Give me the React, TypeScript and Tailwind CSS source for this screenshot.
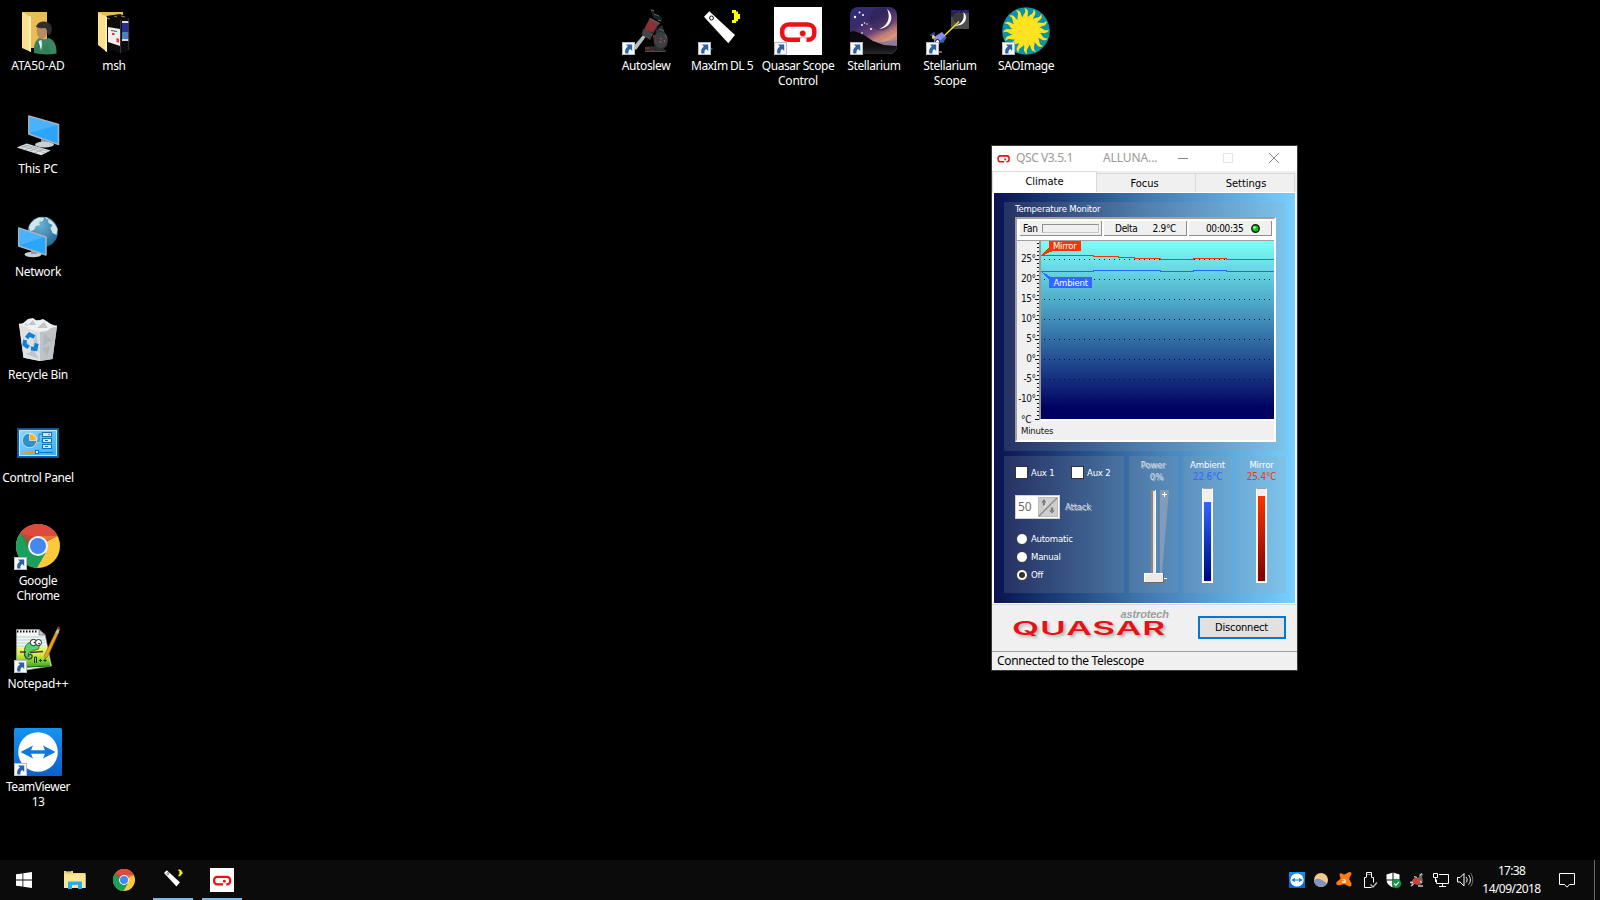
import type { ReactNode } from 'react';

const segoe = "font-['Noto_Sans','Open_Sans',sans-serif]";
const tahoma = "font-['DejaVu_Sans_Condensed','DejaVu_Sans',sans-serif] [font-stretch:condensed]";

/* ---------- shared drawings ---------- */

function ShortcutArrow() {
  return (
    <g>
      <rect x="0" y="35" width="13" height="13" fill="#b8bcc2" />
      <rect x="1" y="36" width="11" height="11" fill="#f7f8fa" />
      <path d="M4 37.500h6.200v6.400l-2-1.800c-1.500 1-2 2.200-1.700 4.400H3.400c-.9-3.300.3-5.500 2.500-7z" fill="#2f5fa5" />
    </g>
  );
}

function Icon48({ children, shortcut = false }: { children: ReactNode; shortcut?: boolean }) {
  return (
    <svg width="48" height="48" viewBox="0 0 48 48" className="shrink-0">
      {children}
      {shortcut && <ShortcutArrow />}
    </svg>
  );
}

function QuasarMark() {
  return (
    <g fill="none" stroke="#ee1014" strokeWidth="4.500">
      <path d="M26 32.700H14.500a6.300 6.300 0 0 1-6.300-6.300v-2.600a6.300 6.300 0 0 1 6.300-6.300h19.500a6.300 6.300 0 0 1 6.300 6.300v2.600a6.300 6.300 0 0 1-6.300 6.300h-1.500" />
      <path d="M26 31.500l3-2 3 2" strokeWidth="1.500" stroke="#f9a9a9" />
      <circle cx="28.700" cy="26.300" r="2.900" fill="#ee1014" stroke="none" />
    </g>
  );
}

function ChromeArt() {
  return (
    <g>
      <circle cx="24" cy="24" r="22" fill="#fdc93c" />
      <path d="M24 24L6.200 11A22 22 0 0 0 23 46l8.600-15z" fill="#1a9f5c" />
      <path d="M24 24L6.200 11A22 22 0 0 1 43.600 14z" fill="#dc4b3e" />
      <path d="M24 14h19.600L31 19z" fill="#e0a92c" opacity=".5" />
      <path d="M15 28L6.200 11L20 15z" fill="#b8382d" opacity=".5" />
      <circle cx="24" cy="24" r="10" fill="#f1f4f8" />
      <circle cx="24" cy="24" r="8" fill="#4688f1" />
    </g>
  );
}

function TeamViewerArt() {
  return (
    <g>
      <defs>
        <linearGradient id="tv" x1="0" y1="0" x2="0" y2="1">
          <stop offset="0" stopColor="#1593ee" />
          <stop offset="1" stopColor="#0b60cb" />
        </linearGradient>
      </defs>
      <rect width="48" height="48" rx="1.500" fill="url(#tv)" />
      <circle cx="24" cy="24" r="19.800" fill="#fff" />
      <path d="M6.500 24l12.500-6.500-2 4.700h14l-2-4.700L41.500 24 29 30.500l2-4.700H17l2 4.700z" fill="#1179dc" />
    </g>
  );
}

function TelescopeArt() {
  return (
    <g>
      <path d="M6 9.700l5.300-5.400L37 28l-6.700 8.300z" fill="#fff" />
      <circle cx="13.500" cy="11" r="2" fill="none" stroke="#111" strokeWidth="1" />
      <path d="M34 3h4v1.500h2V7h2v5h-2v2.300h-2V16h-4v-3h2V6h-2z" fill="#ff0" />
    </g>
  );
}

/* ---------- desktop icons ---------- */

function UserFolder() {
  return (
    <Icon48>
      <path d="M8 5h25v36H16z" fill="#e9bd55" />
      <path d="M8 5l9 5v35l-9-4z" fill="#fbe090" />
      <path d="M17 10v35l-2-1V9z" fill="#fff0b8" />
      <path d="M20 46c-.5-8 1.500-13 6-15.500l4 2 5-1.500c5 2 8 7 7.500 15.500-8 1.500-15 1-22.500-.5z" fill="#3a8662" />
      <path d="M24.500 34l3-1 .5 5-1 6z" fill="#e5ecef" />
      <path d="M20 45c0-7 1-10 3.500-12l4 11 5-9 5 12z" fill="#2b7553" opacity=".5" />
      <ellipse cx="28" cy="24" rx="5.300" ry="8" fill="#b78b64" />
      <path d="M22 20c2-6 10-7 14-3 3 3 2 8 0 11l-2.500-.5c.5-3-1-5-2-6.500-3 .5-6 .5-9.500-1z" fill="#302d2e" />
    </Icon48>
  );
}

function MshFolder() {
  return (
    <Icon48>
      <path d="M8 5h25v6H16z" fill="#e9bd55" />
      <path d="M16 9l14-2 8 3v34l-8 2-14-6z" fill="#0c0c0c" />
      <path d="M18 20l12 2v17l-12-4z" fill="#f0eeee" />
      <path d="M32 15h6.500v10H32z" fill="#2a2f8e" />
      <path d="M32 25h6.500v7H32z" fill="#4a7fc0" />
      <path d="M32 14h6.500v2H32z" fill="#ddd" />
      <path d="M32 32h6.500v2H32z" fill="#d8dbe2" />
      <path d="M22 26h2.500v2H22zM26.500 31l2.500.7v4l-2.500-.8z" fill="#e0343a" />
      <path d="M21 23.500l6 1" stroke="#555" />
      <path d="M17 11l3 1M24 9l3 1M31 9l4 1" stroke="#8a7f68" />
      <path d="M8 5l9 5v35l-9-7z" fill="#fbdf8d" />
      <path d="M15 9l2 1v35l-2-1z" fill="#fff0b8" />
      <path d="M30.500 13v33M38.700 11v32" stroke="#555" strokeWidth=".6" />
    </Icon48>
  );
}

function Monitor({ d, shine }: { d: string; shine: string }) {
  return (
    <g>
      <path d={d} fill="#2aa5fb" stroke="#aab4bd" strokeWidth="1.500" strokeLinejoin="round" />
      <path d={shine} fill="#6cc3fd" opacity=".45" />
    </g>
  );
}

function ThisPC() {
  return (
    <Icon48>
      <path d="M27 29l8 3v4h-8z" fill="#8c979f" />
      <ellipse cx="30.500" cy="34.500" rx="9.500" ry="3" fill="#c8d0d5" />
      <Monitor d="M14.800 6L44.500 14.500v20L14.800 24z" shine="M15.500 7l28 8L16 23z" />
      <path d="M2.700 37.500l10-4 24 7-9.500 4.800z" fill="#dde1e4" />
      <path d="M6 38.500l9.500-3.700M10.500 40l9.500-3.700M15 41.400l9.500-3.700M20 43l9.500-3.700M7 35.800l24 7M10 34.800l24 6.500" stroke="#8f989f" strokeWidth=".6" />
    </Icon48>
  );
}

function Network() {
  return (
    <Icon48>
      <defs>
        <radialGradient id="globe" cx=".4" cy=".25" r=".8">
          <stop offset="0" stopColor="#6db3d6" />
          <stop offset="1" stopColor="#1f6691" />
        </radialGradient>
      </defs>
      <circle cx="28.700" cy="19" r="15.200" fill="url(#globe)" />
      <path d="M15 14c2-5 6-8 10-9.500l5 .5-1 3-4 1 1 3-4 1-2 4-4 1zM34 6c4 1 8 6 9.500 10l-1 6-4-2-2-5 2-3-4-2zM31 4l3 1-1 2z" fill="#cfe6ea" />
      <ellipse cx="19" cy="41.500" rx="8.500" ry="2.700" fill="#c8d0d5" />
      <path d="M17 36l6 2v3h-6z" fill="#8c979f" />
      <Monitor d="M4.700 15L32 24v18L4.700 33z" shine="M5.500 16l25 8.300L6 32z" />
    </Icon48>
  );
}

function RecycleBin() {
  return (
    <Icon48>
      <path d="M5 8l19-4 19 6-4.500 33L26 45 9.500 41.700z" fill="#d3d7da" />
      <path d="M5 8l21 6v31L9.500 41.700z" fill="#dfe2e5" />
      <path d="M26 14l17-4-4.500 33L26 45z" fill="#bfc4c8" />
      <path d="M8 8l6-5 5-1 4 3 6-2 5 3 5 4-6 5-8 1-10-3z" fill="#eef0f1" />
      <path d="M14 9l5-5 3 5zM23 12l7-6 4 6zM12 7l4 5-6-3z" fill="#c0c6ca" />
      <path d="M9 22l10 10-9-2zM22 16l-3 13 6 8zM12 38l8-4 5 9zM30 18l8 6-9 6zM40 14l-3 12 2-1zM28 32l8-2-3 10z" fill="#a0a7ad" opacity=".45" />
      <path d="M5 8l21 6 17-4" fill="none" stroke="#f4f5f6" strokeWidth="1.200" />
      <g fill="none" stroke="#0f7fd8" strokeWidth="4">
        <path d="M12.500 22l3-3.500 5 2.500" />
        <path d="M11 24l-.5 4.500 4 3" />
        <path d="M17 32.500l4.500.5 1.200-5.500" />
      </g>
    </Icon48>
  );
}

function ControlPanel() {
  return (
    <Icon48>
      <defs>
        <linearGradient id="cpl" x1="0" y1="0" x2="1" y2="1">
          <stop offset="0" stopColor="#8fd6fd" />
          <stop offset="1" stopColor="#37aef6" />
        </linearGradient>
      </defs>
      <rect x="3" y="9" width="42" height="30" fill="#0a69ad" />
      <rect x="3.500" y="9.500" width="41" height="29" fill="none" stroke="#18517f" />
      <rect x="5.500" y="11.500" width="37" height="25" fill="url(#cpl)" stroke="#bde6fd" />
      <circle cx="15.500" cy="21.500" r="7.200" fill="#2e8fce" stroke="#d4eefc" strokeWidth=".8" />
      <path d="M15.500 21.500V14.500a7 7 0 0 1 7 7z" fill="#ffb01f" stroke="#fff" strokeWidth=".6" />
      <path d="M23 22h2v-7h4M27 22h2" fill="none" stroke="#1b85c6" />
      <g fill="#c9ebfe" stroke="#1272b6">
        <rect x="28.500" y="13.500" width="9" height="4" />
        <rect x="28.500" y="19.500" width="9" height="4" />
        <rect x="28.500" y="25.500" width="9" height="4" />
      </g>
      <path d="M34 15.500h2" stroke="#e8801b" strokeWidth="1.500" />
      <path d="M31 21.500h3M31 27.500h3" stroke="#1272b6" />
      <path d="M9 33.500h14" stroke="#f59a13" />
      <path d="M24 33.500h15" stroke="#1272b6" />
      <rect x="21.500" y="31.500" width="3" height="3" fill="#e0f4ff" stroke="#1272b6" />
    </Icon48>
  );
}

function NotepadPP() {
  return (
    <Icon48 shortcut>
      <defs>
        <linearGradient id="npp" x1="0" y1="0" x2="0" y2="1">
          <stop offset="0" stopColor="#f4f99a" />
          <stop offset=".4" stopColor="#d3ec3a" />
          <stop offset="1" stopColor="#2fa51d" />
        </linearGradient>
      </defs>
      <path d="M2.500 4.500H25l6 5 6.500 31.500L12 45H2.500z" fill="#f6f8f8" stroke="#999" strokeWidth=".7" />
      <path d="M25 4.500V10h6z" fill="#c9cdd0" stroke="#555" strokeWidth=".6" />
      <path d="M3 6.500h21" stroke="#111" strokeWidth="2" strokeDasharray="1.500 1.500" />
      <path d="M3 12h27M3 15h28M3 18h28M3 21h29" stroke="#9fc5cc" strokeWidth=".8" />
      <path d="M3 22l30-1 3.500 20-33.500 2z" fill="url(#npp)" />
      <path d="M3 42.500l33-1.500" stroke="#196b18" />
      <path d="M10.500 26c0-5 3-9 8-9l7 3-1 4-6 2c-3 0-5 2-4 5 0 2-2 2-4-1z" fill="#56d36c" stroke="#1f5a2a" strokeWidth=".8" />
      <path d="M10.500 27c-.5 5 2 7.500 5 7s3.500-4 1-4.500-2.500 1.500-1 2" fill="none" stroke="#1f5a2a" strokeWidth="1.400" />
      <circle cx="19.500" cy="17.500" r="3.200" fill="#fff" stroke="#111" strokeWidth=".9" />
      <circle cx="24.500" cy="17.500" r="3" fill="#fff" stroke="#111" strokeWidth=".9" />
      <circle cx="20.500" cy="17.500" r=".8" fill="#111" />
      <circle cx="25" cy="18.500" r=".8" fill="#111" />
      <path d="M6 27h6M16 27.500l13-1" stroke="#5a2d37" strokeWidth="1.400" />
      <path d="M20.500 38v-6h2v6M25 35.500h3M29.500 35.500h3M26.500 34v3M31 34v3" fill="none" stroke="#143c10" />
      <path d="M31 34l-.5-4L42 6l3 1-11 24z" fill="#e8a316" stroke="#7d5410" strokeWidth=".5" />
      <path d="M41.500 7.500l1.700-4 2.600 1L44 9z" fill="#b9bec5" />
      <path d="M43 4l1-2.500 2 .8-.8 2.700z" fill="#a8323a" />
    </Icon48>
  );
}

function Autoslew() {
  return (
    <Icon48 shortcut>
      <path d="M11 40L22 27l2 2.500L14 43z" fill="#b9bcbe" />
      <path d="M20 26l8-15 10 5-8 13z" fill="#313334" />
      <path d="M23 21l5-10 9 5-6 9-8-1z" fill="#8a3132" />
      <path d="M21 22l10 5-3 6-8-5z" fill="#424546" />
      <path d="M28 11l10 5-.8 1.600-10-5z" fill="#595b5c" />
      <path d="M28 2l4 1v4l8 3-.5 5-8-4z" fill="#1f2122" />
      <path d="M29 3l3 1M32 7l5 2M36 13l3 1" stroke="#66696b" />
      <path d="M34 23l6-5 3 8 3 6-1 7-6 5-7-2z" fill="#2c2f31" />
      <ellipse cx="38.500" cy="33" rx="7" ry="8" fill="#3b3f41" />
      <path d="M38 31l2 1M37 35h3M42 33l1 2" stroke="#b8575a" />
      <path d="M23 40l7-1 14 4v2H23z" fill="#2a2c2d" />
      <path d="M23 40h4l1 2h-5zM31 28h3v3h-3zM29 43h3v1h-3z" fill="#7e2527" />
      <path d="M23 44.500h20" stroke="#4a4c4e" />
      <path d="M37 22l5 2M43 27l2 4" stroke="#5b6268" />
    </Icon48>
  );
}

function MaximDL() {
  return (
    <Icon48 shortcut>
      <TelescopeArt />
      <rect x="12.500" y="41" width="2" height="1.500" fill="#0a7d7d" />
    </Icon48>
  );
}

function QuasarScope() {
  return (
    <Icon48 shortcut>
      <rect width="48" height="48" fill="#fff" />
      <QuasarMark />
    </Icon48>
  );
}

function Stellarium() {
  return (
    <Icon48 shortcut>
      <defs>
        <linearGradient id="sky" x1="0" y1="0" x2=".5" y2="1">
          <stop offset="0" stopColor="#2b2f78" />
          <stop offset=".4" stopColor="#3c2a68" />
          <stop offset=".62" stopColor="#6a4474" />
          <stop offset=".78" stopColor="#c98478" />
        </linearGradient>
        <linearGradient id="hill" x1="0" y1="0" x2="0" y2="1">
          <stop offset="0" stopColor="#08080c" />
          <stop offset=".6" stopColor="#0e0e12" />
          <stop offset="1" stopColor="#2c2c30" />
        </linearGradient>
        <clipPath id="skyClip"><rect width="47" height="47" rx="8" /></clipPath>
      </defs>
      <g clipPath="url(#skyClip)">
        <rect width="47" height="47" fill="url(#sky)" />
        <circle cx="31" cy="12" r="11.500" fill="#241f50" opacity=".4" />
        <path d="M26 35c8-2 14-6 21-11v5c-7 4-12 7-21 8z" fill="#e09a78" opacity=".7" />
        <path d="M24 34c8 2 15 0 23-1v6l-13-1z" fill="#8c7c9a" />
        <path d="M0 25l3-1 4 1 7 3 9 6 11 4 13 1v10H0z" fill="url(#hill)" />
        <path d="M37 2c8 6 5 19-8 20 6-2 13-9 8-20z" fill="#fbfaf0" />
        <g fill="#fff">
          <circle cx="5" cy="10" r="1.200" /><circle cx="9.500" cy="5.500" r="1" /><circle cx="13" cy="8" r="1" />
          <circle cx="12" cy="18" r="1" /><circle cx="14.500" cy="16" r=".8" /><circle cx="17" cy="17" r=".7" />
          <circle cx="21" cy="22" r="1" /><circle cx="12" cy="26" r=".8" />
        </g>
      </g>
    </Icon48>
  );
}

function StellariumScope() {
  return (
    <Icon48 shortcut>
      <rect x="25" y="3" width="18" height="19" fill="#4c4c4e" />
      <path d="M25 3h18v3H25zM25 6h4v4h-4z" fill="#25204f" />
      <path d="M27 4h2M32 5h2M38 4h3M41 8h2" stroke="#3f2bbd" />
      <circle cx="32.500" cy="11" r="5.500" fill="#3a3a3c" />
      <path d="M37.500 5c5.500 5 2 15-9.500 13.500 7-.5 11-6 9.500-13.500z" fill="#fff" />
      <path d="M33 14.500L18 29" stroke="#f2ee20" strokeWidth="1.300" />
      <path d="M8 30l8-5 4 5-8 8H8z" fill="#8a8af2" />
      <path d="M13 35l5-5h3l-4 6z" fill="#2467b6" />
      <path d="M4 28h4M6 26l2 4M8 25v8" stroke="#3d6ce3" />
      <path d="M6 30h3M7 28v4" stroke="#ffe23d" strokeWidth="1.300" />
      <circle cx="11.500" cy="34.500" r="2" fill="#fff" stroke="#111" />
      <path d="M12 45h4" stroke="#888" strokeWidth="1.500" />
    </Icon48>
  );
}

function SunRays() {
  const rays = Array.from({ length: 16 }, (_, i) => i * 22.5);
  return (
    <g fill="#fee31e">
      {rays.map((a) => (
        <path key={a} d="M20.500 10.500c.5-3.500 4.500-4.500 2-9.500 5 2 3.200 5.500 3.200 7.500 0 1.500.8 2.500 1.800 3z" transform={`rotate(${a} 24 24)`} />
      ))}
      <circle cx="24" cy="24" r="13.800" />
    </g>
  );
}

function SAOImage() {
  return (
    <Icon48 shortcut>
      <circle cx="24" cy="24" r="23.800" fill="#0d93a8" />
      <SunRays />
    </Icon48>
  );
}

type Line = { t: string; c: string };

function DesktopItem({ icon, lines }: { icon: ReactNode; lines: Line[] }) {
  return (
    <div className="flex h-[103px] w-[76px] flex-col items-center pt-[7px]">
      {icon}
      <div className={`mt-[3px] flex flex-col items-center text-[12px] leading-[15px] whitespace-nowrap text-white ${segoe}`}>
        {lines.map((l) => (
          <span key={l.t} className={l.c}>{l.t}</span>
        ))}
      </div>
    </div>
  );
}

/* ---------- Quasar window ---------- */

function Tab({ label, className }: { label: string; className: string }) {
  return <div className={`flex items-center justify-center border-[#d9d9d9] text-[11px] text-black ${className}`}>{label}</div>;
}

const majors = [259, 279, 299, 319, 339, 359, 379, 399];
const majorLabels = ['25°', '20°', '15°', '10°', '5°', '0°', '-5°', '-10°'];
const minors = Array.from({ length: 44 }, (_, i) => 243 + i * 4);

function Chart() {
  return (
    <svg width="257" height="200" viewBox="1017 240 257 200" shapeRendering="crispEdges" className="block">
      <defs>
        <linearGradient id="depth" x1="0" y1="0" x2="0" y2="1">
          <stop offset="0" stopColor="#7dfff8" />
          <stop offset=".33" stopColor="#50adcb" />
          <stop offset=".66" stopColor="#245093" />
          <stop offset=".94" stopColor="#000062" />
          <stop offset="1" stopColor="#000060" />
        </linearGradient>
      </defs>
      <rect x="1017" y="240" width="257" height="200" fill="#f0f0f0" />
      <rect x="1017" y="240" width="257" height="1" fill="#a0a0a0" />
      <rect x="1039" y="241" width="2" height="179" fill="#9a9a9a" />
      <rect x="1041" y="241" width="233" height="178" fill="url(#depth)" />
      <rect x="1040" y="419" width="234" height="2" fill="#fff" />
      {minors.map((y) => (
        <rect key={y} x="1037" y={y} width="2" height="1" fill="#111" />
      ))}
      {majors.map((y, i) => (
        <g key={y}>
          <rect x="1035" y={y} width="4" height="1" fill="#111" />
          <path d={`M1044 ${y + 0.5}H1274`} stroke="#001020" strokeDasharray="1 4" />
          <text x="1035.500" y={y + 3} textAnchor="end" fontSize="10" letterSpacing="-.5" fill="#111">{majorLabels[i]}</text>
        </g>
      ))}
      <rect x="1035" y="419" width="4" height="1" fill="#111" />
      <text x="1021" y="423" fontSize="10" letterSpacing="-.3" fill="#111">°C</text>
      <text x="1021" y="434" fontSize="9.500" letterSpacing="-.2" fill="#111">Minutes</text>
      <path d="M1041 255.500h52v1h25v1h16v1h26v1h33v-1h33v1h48" fill="none" stroke="#ff3300" />
      <path d="M1041 271.500h52v-1h67v1h33v-1h33v1h48" fill="none" stroke="#2f63ff" />
      <path d="M1041 256l8-9v-6h32v10h-28z" fill="#ff3300" />
      <path d="M1041 271l10 6h41v11h-43v-8z" fill="#3366ff" />
      <text x="1053" y="249" fontSize="9.500" letterSpacing="-.3" fill="#fff">Mirror</text>
      <text x="1053.500" y="286" fontSize="9.500" letterSpacing="-.25" fill="#fff">Ambient</text>
    </svg>
  );
}

function Cell({ children, className = '' }: { children: ReactNode; className?: string }) {
  return (
    <div className={`flex h-[15px] items-center border-r border-b border-[#8f8f8f] bg-[#f0f0f0] text-[10px] text-black ${className}`}>
      {children}
    </div>
  );
}

function TemperatureMonitor() {
  return (
    <div className="h-[249px] w-[281px] bg-[#a0a0a0]/18 pl-[11px]">
      <div className="h-[15px] text-[9.500px] leading-[13px] tracking-[-0.2px] text-white">Temperature Monitor</div>
      <div className="h-[225px] w-[261px] border-2 border-t-[#a0a0a0] border-r-white border-b-white border-l-[#a0a0a0] bg-[#f0f0f0]">
        <div className="flex h-[21px] gap-[2px] border-b-2 border-white bg-white pt-[2px] pl-[3px]">
          <Cell className="w-[82px] pl-[3px] tracking-[-0.3px]">
            Fan
            <div className="ml-1 h-[9px] w-[57px] border border-t-[#909090] border-r-[#c8c8c8] border-b-[#c8c8c8] border-l-[#909090]" />
          </Cell>
          <Cell className="w-[83px] pl-[11px] tracking-[-0.3px]">
            Delta<span className="ml-[15px]">2.9°C</span>
          </Cell>
          <Cell className="w-[83px] pl-[17px] tracking-[-0.4px]">
            00:00:35
            <svg width="9" height="9" viewBox="0 0 9 9" className="ml-2">
              <circle cx="4.500" cy="4.500" r="3.700" fill="#0bd012" stroke="#0c2310" strokeWidth="1.500" />
              <circle cx="3.500" cy="3.500" r="1.300" fill="#dfffdc" />
            </svg>
          </Cell>
        </div>
        <Chart />
      </div>
    </div>
  );
}

function Radio({ label, on = false }: { label: string; on?: boolean }) {
  return (
    <div className="flex h-[18px] items-center gap-1 text-[9.500px] tracking-[-0.25px] text-white">
      <span className="flex size-[12px] items-center justify-center rounded-full border border-[#333] bg-white">
        {on && <span className="size-[6px] rounded-full bg-[#333]" />}
      </span>
      <span className="-ml-px pt-px">{label}</span>
    </div>
  );
}

function Check({ label }: { label: string }) {
  return (
    <div className="flex w-[56px] shrink-0 items-center gap-1 text-[9.500px] tracking-[-0.2px] text-white">
      <span className="size-[13px] border border-[#333] bg-white" />
      <span className="-ml-px pt-0.5">{label}</span>
    </div>
  );
}

const engraved = 'text-[#d3d8e0] [text-shadow:1px_1px_0_#ffffff70]';

function Controls() {
  return (
    <div className="h-[137px] w-[120px] bg-[#a0a0a0]/18 pt-[9px] pl-[11px]">
      <div className="flex h-[14px] items-center">
        <Check label="Aux 1" />
        <Check label="Aux 2" />
      </div>
      <div className="mt-[16px] flex items-center">
        <div className="flex h-6 w-[45px] items-center justify-between border border-[#d0d0d0] bg-white pr-[1px] pl-[2px]">
          <span className={`text-[12px] text-[#6d6d6d] ${segoe}`}>50</span>
          <svg width="20" height="20" viewBox="0 0 20 20">
            <rect width="20" height="20" fill="#bcbcbc" />
            <rect x="1" y="1" width="18" height="18" fill="#cecece" />
            <path d="M1 19L19 1" stroke="#8a8a8a" strokeWidth="1.300" />
            <path d="M6 9.500V6H4l3-3.500L10 6H8v3.500zM13 11v3h-2l3 3.500 3-3.500h-2v-3z" fill="#fff" />
            <path d="M4.700 8.500V5.500H3l3-3.500 3 3.500H7.300v3zM12.700 10.500v3H11l3 3.500 3-3.500h-1.700v-3z" fill="#7f7f7f" />
          </svg>
        </div>
        <span className={`ml-[5px] text-[9.500px] tracking-[-0.2px] ${engraved}`}>Attack</span>
      </div>
      <div className="mt-[11px] pl-[1px]">
        <Radio label="Automatic" />
        <Radio label="Manual" />
        <Radio label="Off" on />
      </div>
    </div>
  );
}

function PowerSlider() {
  return (
    <div className="flex h-[137px] w-[49px] flex-col items-center bg-[#a0a0a0]/18 pt-[3px] text-[9.500px] leading-3">
      <span className={`-ml-px tracking-[-0.2px] ${engraved}`}>Power</span>
      <span className={`ml-1.5 ${engraved}`}>0%</span>
      <svg width="31" height="96" viewBox="1138 489 31 96" className="mt-[6px] shrink-0">
        <path d="M1160 490h9l-7 83h-2z" fill="#8f9fb9" opacity=".8" />
        <path d="M1162 494.500h5M1164.500 492v5M1163 578.500h4" stroke="#fff" />
        <rect x="1151" y="490" width="5" height="84" fill="#fff" />
        <rect x="1151" y="490" width="4" height="84" fill="#8c8780" />
        <rect x="1153" y="491" width="2" height="83" fill="#e8e6e2" />
        <rect x="1144" y="573" width="20" height="10" fill="#6d6a63" />
        <rect x="1144" y="573" width="19" height="9" fill="#fff" />
        <rect x="1145" y="574" width="18" height="8" fill="#ece9e6" />
      </svg>
    </div>
  );
}

function Thermometer({ label, value, color, fill }: { label: string; value: string; color: string; fill: string }) {
  return (
    <div className="flex h-[137px] w-[49px] flex-col items-center bg-[#a0a0a0]/18 pt-[3px] text-[9.500px] leading-3 text-white">
      <span className="tracking-[-0.15px]">{label}</span>
      <span className={`text-[10px] tracking-[-0.2px] ${color}`}>{value}</span>
      <div className="mt-[5px] flex h-[95px] w-[11px] flex-col justify-end border border-t-[#a0a0a0] border-r-white border-b-white border-l-white bg-[#f0f0f0] px-px pb-px">
        <div className={`w-[7px] bg-linear-to-b ${fill}`} />
      </div>
    </div>
  );
}

function QuasarWindow() {
  return (
    <div className={`absolute top-[146px] left-[992px] flex h-[524px] w-[305px] flex-col bg-[#f0f0f0] outline outline-[#3a3a3a] ${tahoma}`}>
      <div className={`flex h-[25px] shrink-0 items-center bg-white text-[12px] text-[#999] ${segoe}`}>
        <svg width="13" height="8" viewBox="5 15 38 21" preserveAspectRatio="none" className="ml-[5px]">
          <QuasarMark />
        </svg>
        <span className="mb-0.5 ml-1.5 w-[87px] tracking-[-0.4px]">QSC V3.5.1</span>
        <span className="mb-0.5 w-[71px] tracking-[-0.1px]">ALLUNA...</span>
        <svg width="110" height="12" viewBox="0 0 110 12" className="-mt-px">
          <path d="M4 6.500h10" stroke="#888" />
          <rect x="49.500" y="1.500" width="9" height="9" fill="none" stroke="#e4e4e4" />
          <path d="M95 1l10 10M105 1L95 11" stroke="#888" />
        </svg>
      </div>
      <div className="flex h-[21px] shrink-0 items-end">
        <Tab label="Climate" className="h-[21px] w-[105px] border-t border-r border-l bg-white" />
        <Tab label="Focus" className="h-[19px] w-[99px] border-t border-r pt-[2px] pr-[3px]" />
        <Tab label="Settings" className="h-[19px] w-[99px] border-t border-r pt-[2px] pl-[2px]" />
      </div>
      <div className="h-[413px] w-[304px] shrink-0 border-b border-[#d9d9d9] bg-white px-px pt-px pb-px pl-[2px]">
        <div className="flex h-[410px] w-[301px] flex-col gap-[5px] bg-linear-to-r from-[#0a1250] via-[#4078b0] to-[#78d0ff] pt-[9px] pl-[10px]">
          <TemperatureMonitor />
          <div className="flex gap-[5px]">
            <Controls />
            <PowerSlider />
            <Thermometer label="Ambient" value="22.6°C" color="text-[#3366ff]" fill="h-[79px] from-[#3366ff] to-[#000080]" />
            <Thermometer label="Mirror" value="25.4°C" color="text-[#ff3300]" fill="h-[85px] from-[#ff3300] to-[#800000]" />
          </div>
        </div>
      </div>
      <div className="flex h-[46px] shrink-0 items-start justify-between pr-[11px] pl-[20px]">
        <div className="flex w-[157px] flex-col items-end pt-[4px]">
          <span className="font-['Liberation_Sans',sans-serif] text-[11px] leading-[11px] font-bold tracking-[-0.1px] text-[#9d9d9d] italic">astrotech</span>
          <span className="h-[15px] w-[157px] origin-left scale-x-[1.95] font-['Inter',sans-serif] text-[18px] leading-[18px] font-semibold tracking-[0.5px] whitespace-nowrap text-[#e51317] [text-shadow:1px_2px_2px_#00000040]">QUASAR</span>
        </div>
        <div className="mt-[11px] flex h-[23px] w-[88px] items-center justify-center border-2 border-[#0078d7] bg-[#e1e1e1] pt-0.5 pr-px text-[11px] tracking-[-0.2px] text-black">
          Disconnect
        </div>
      </div>
      <div className={`h-[19px] border-t border-[#a0a0a0] pl-[5px] text-[12px] leading-[18px] tracking-[-0.33px] text-black ${segoe}`}>
        Connected to the Telescope
      </div>
    </div>
  );
}

/* ---------- taskbar ---------- */

function TaskButton({ children, active = false }: { children: ReactNode; active?: boolean }) {
  return (
    <div className={`flex h-10 w-10 items-center justify-center ${active ? 'border-b-2 border-[#76b9ed] pt-[2px]' : ''}`}>
      {children}
    </div>
  );
}

function Tray() {
  return (
    <svg width="190" height="20" viewBox="1286 870 190 20" className="block">
      <g transform="translate(1289 872) scale(.3334)"><TeamViewerArt /></g>
      <circle cx="1321" cy="880" r="7" fill="#f6c88b" />
      <path d="M1314 880.500c3-3 7-2 13 3-3 5-12 5-13-3z" fill="#7f94c4" />
      <path d="M1340 873.500c1.500-1 3 1 4.500 1s3-2.500 5-2.500 2.500 1.500 1.500 3-2 3-1.500 4.500 2.500 3.500 2 5.500-2.500 2-4 .8-3-1.800-5-1.300-5 1.500-6 0 .5-3 2-4 2-1.500 1.800-3-1.300-3-.3-4z" fill="#ff7a12" />
      <text x="1342" y="882.500" fontSize="8" fontWeight="700" fill="#fff" fontFamily="Lato, sans-serif">a</text>
      <g fill="none" stroke="#fff">
        <path d="M1366.500 877v-4.500h5v4.500M1371.500 877.500h2v5M1366.500 877.500h-2v10h7M1367.500 874.500h1M1369.500 874.500h1" />
        <path d="M1370.500 884.500l2.500 2.500 4-4.500" stroke="#bbb" strokeWidth="1.300" />
      </g>
      <path d="M1393 872.500l6.500 2v5c0 4-3 6.500-6.500 8-3.500-1.500-6.500-4-6.500-8v-5z" fill="#fff" />
      <path d="M1393 872v16M1386 880h14" stroke="#111" />
      <circle cx="1396.500" cy="883.500" r="4.700" fill="#149447" />
      <path d="M1394.200 883.500l1.700 1.800 3-3.500" fill="none" stroke="#fff" strokeWidth="1.200" />
      <path d="M1411 882l4-5 3 1 3-4 2 0-1 3 1 4-3 4-6-1-2 2z" fill="#6d6566" />
      <path d="M1413 879l3 0 3-1.500 1.500 3-3 4.500-4-2z" fill="#e13a30" />
      <path d="M1410 882.500h3M1411 886l2.500-2M1419.500 875.500l2.500-2M1418 886l5 0M1414 876.500l3 1M1420 881l2 2" stroke="#d0cbcb" strokeWidth="1.300" />
      <g fill="none" stroke="#fff">
        <path d="M1439 874.500h9.500v9h-12v-4M1442.500 884v2.500M1439 886.500h7M1433.500 873.500h4v4h-4zM1435.500 878v4" />
        <path d="M1457.500 877.500h2.500l4-4v12.500l-4-4h-2.500z" />
        <path d="M1466 877c1.500 1.500 1.500 4 0 5.500M1468.500 875c2.500 3 2.500 7 0 9.500" />
        <path d="M1470.500 873c3 4 3 9.500 0 13.500" stroke="#777" />
      </g>
    </svg>
  );
}

function Taskbar() {
  return (
    <div className="absolute bottom-0 left-0 flex h-10 w-[1600px] bg-[#0b0b0b]">
      <div className="flex w-[48px] items-center pl-4">
        <svg width="16" height="16" viewBox="0 0 16 16" fill="#fff">
          <path d="M0 2.300l6.500-.9v6.200H0zM7.300 1.300L16 0v7.600H7.300zM0 8.400h6.500v6.200L0 13.700zM7.300 8.400H16V16l-8.700-1.200z" />
        </svg>
      </div>
      <div className="ml-[7px] flex gap-[9px]">
        <TaskButton>
          <svg width="22" height="18" viewBox="0 0 22 18">
            <path d="M0 0h9v2h12.500v15H0z" fill="#f6d67c" />
            <path d="M2 .7h5" stroke="#2c7fd0" strokeWidth="1" />
            <path d="M0 3.500h21.500V17H0z" fill="#fde596" />
            <path d="M4 18v-7.500h14V18h-4v-4H8v4z" fill="#33aae4" />
          </svg>
        </TaskButton>
        <TaskButton>
          <svg width="24" height="24" viewBox="0 0 48 48"><ChromeArt /></svg>
        </TaskButton>
        <TaskButton active>
          <svg width="22" height="22" viewBox="2 2 43 43">
            <TelescopeArt />
          </svg>
        </TaskButton>
        <TaskButton active>
          <svg width="24" height="24" viewBox="0 0 48 48">
            <rect width="48" height="48" fill="#fff" />
            <QuasarMark />
          </svg>
        </TaskButton>
      </div>
      <div className="ml-auto flex h-10 items-center">
        <Tray />
        <div className={`flex w-[71px] flex-col items-center text-[12px] leading-[18px] text-white ${segoe}`}>
          <span className="tracking-[-0.7px]">17:38</span>
          <span className="tracking-[-0.55px]">14/09/2018</span>
        </div>
        <svg width="18" height="18" viewBox="0 0 18 18" fill="none" stroke="#fff" className="ml-[11px]">
          <path d="M1.500 2.500h15v11h-5l-2.500 2.700-2.500-2.700h-5z" />
        </svg>
        <div className="ml-[18px] h-10 w-[6px] border-l border-[#6a6a6a]" />
      </div>
    </div>
  );
}

export default function App() {
  return (
    <div className="relative h-[900px] w-[1600px] overflow-hidden bg-black">
      <div className="absolute top-0 left-0 flex">
        <div className="flex flex-col">
          <DesktopItem icon={<UserFolder />} lines={[{ t: 'ATA50-AD', c: 'tracking-[-0.1px]' }]} />
          <DesktopItem icon={<ThisPC />} lines={[{ t: 'This PC', c: 'tracking-[-0.2px]' }]} />
          <DesktopItem icon={<Network />} lines={[{ t: 'Network', c: 'tracking-[-0.3px]' }]} />
          <DesktopItem icon={<RecycleBin />} lines={[{ t: 'Recycle Bin', c: 'tracking-[-0.3px]' }]} />
          <DesktopItem icon={<ControlPanel />} lines={[{ t: 'Control Panel', c: 'tracking-[-0.35px]' }]} />
          <DesktopItem icon={<Icon48 shortcut><ChromeArt /></Icon48>} lines={[{ t: 'Google', c: 'tracking-[-0.3px]' }, { t: 'Chrome', c: 'tracking-[-0.3px]' }]} />
          <DesktopItem icon={<NotepadPP />} lines={[{ t: 'Notepad++', c: 'tracking-[-0.2px]' }]} />
          <DesktopItem icon={<Icon48 shortcut><TeamViewerArt /></Icon48>} lines={[{ t: 'TeamViewer', c: 'tracking-[-0.45px]' }, { t: '13', c: 'tracking-[-0.5px]' }]} />
        </div>
        <DesktopItem icon={<MshFolder />} lines={[{ t: 'msh', c: 'tracking-[-0.3px]' }]} />
      </div>
      <div className="absolute top-0 left-[608px] flex">
        <DesktopItem icon={<Autoslew />} lines={[{ t: 'Autoslew', c: 'tracking-[-0.35px]' }]} />
        <DesktopItem icon={<MaximDL />} lines={[{ t: 'MaxIm DL 5', c: 'tracking-[-0.55px]' }]} />
        <DesktopItem icon={<QuasarScope />} lines={[{ t: 'Quasar Scope', c: 'tracking-[-0.45px]' }, { t: 'Control', c: 'tracking-[-0.25px]' }]} />
        <DesktopItem icon={<Stellarium />} lines={[{ t: 'Stellarium', c: 'tracking-[-0.4px]' }]} />
        <DesktopItem icon={<StellariumScope />} lines={[{ t: 'Stellarium', c: 'tracking-[-0.4px]' }, { t: 'Scope', c: 'tracking-[-0.3px]' }]} />
        <DesktopItem icon={<SAOImage />} lines={[{ t: 'SAOImage', c: 'tracking-[-0.45px]' }]} />
      </div>
      <QuasarWindow />
      <Taskbar />
    </div>
  );
}
